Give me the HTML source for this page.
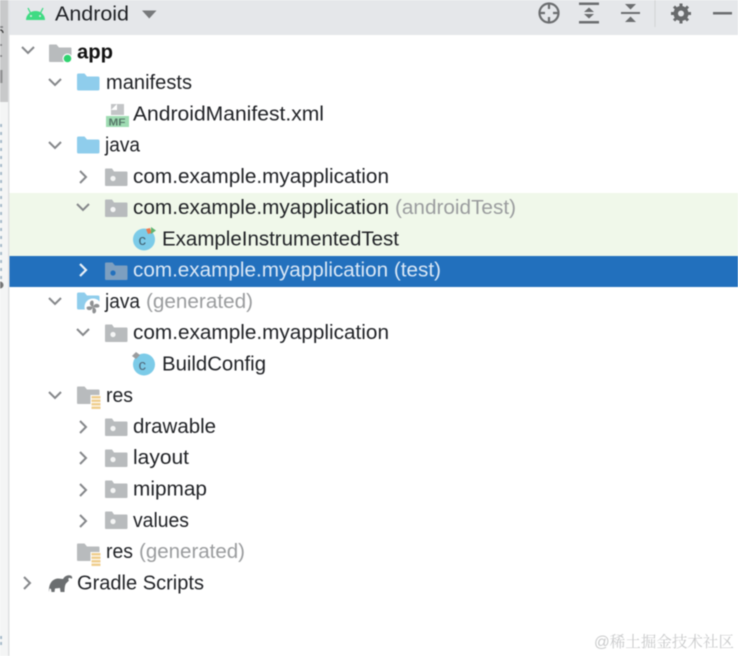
<!DOCTYPE html>
<html><head><meta charset="utf-8">
<style>
html,body{margin:0;padding:0;background:#fff;width:738px;height:656px;overflow:hidden}
svg{display:block;filter:blur(.5px)}
text{font-family:"Liberation Sans","Noto Sans CJK SC",sans-serif;font-size:20.5px;fill:#1f2125}
.g{fill:#9a9c9e}
.ch{fill:none;stroke:#85878a;stroke-width:2}
</style></head><body>
<svg width="738" height="656" viewBox="0 0 738 656" xmlns="http://www.w3.org/2000/svg">
<defs>
<g id="pkg"><path d="M0 1.500a1 1 0 0 1 1-1h6l2 3h12.500a1 1 0 0 1 1 1v12.500a1 1 0 0 1-1 1h-20.500a1 1 0 0 1-1-1z" fill="#b8bbbd"/><circle cx="8" cy="10.500" r="2.600" fill="#f4f5f5"/></g>
<g id="fold"><path d="M0 2a1.500 1.500 0 0 1 1.500-1.500h6l2.500 3h11a1.500 1.500 0 0 1 1.500 1.500v11a1.500 1.500 0 0 1-1.500 1.500h-19.500a1.500 1.500 0 0 1-1.500-1.500z" fill="#8fcdec"/></g>
<g id="grey"><path d="M0 1.500a1 1 0 0 1 1-1h6.500l2.500 3h11.500a1 1 0 0 1 1 1v12.500a1 1 0 0 1-1 1h-20.500a1 1 0 0 1-1-1z" fill="#b8bbbd"/></g>
<path id="d" class="ch" d="M-6-3L0 3L6-3"/>
<path id="r" class="ch" d="M-3-6L3 0L-3 6"/>
<g id="res"><use href="#grey"/><rect x="13.500" y="9" width="11" height="14" fill="#fff"/><rect x="14.500" y="10" width="9" height="2.500" fill="#f0cf90"/><rect x="14.500" y="13.500" width="9" height="2.500" fill="#f0cf90"/><rect x="14.500" y="17" width="9" height="2.500" fill="#f0cf90"/><rect x="14.500" y="20.500" width="9" height="2.500" fill="#f0cf90"/></g>
</defs>

<!-- left strip -->
<rect x="0" y="0" width="9" height="656" fill="#f4f5f5"/>
<rect x="0" y="0" width="8" height="102" fill="#c8c9ca"/>
<rect x="8" y="0" width="1.500" height="656" fill="#dfe0e2"/>
<rect x="0" y="70" width="2.500" height="13" fill="#919293"/>
<path d="M0 27h3M0 45h2M0 56h2" stroke="#77797b" stroke-width="1.500"/>
<path d="M0 30q3 0 3 3" stroke="#333" stroke-width="1.200" fill="none"/>
<path d="M1 124v155" stroke="#a4b8c8" stroke-width="2" stroke-dasharray="3 5"/>
<circle cx="0" cy="285" r="3.500" fill="#777"/>
<path d="M1 636v12" stroke="#a4b8c8" stroke-width="2" stroke-dasharray="3 3"/>

<!-- toolbar -->
<rect x="9.500" y="0" width="729" height="35" fill="#e5e7ea"/>
<path d="M30.500 13l-2.500-5M40.500 13l2.500-5" stroke="#3fdb83" stroke-width="1.300" fill="none"/>
<path d="M26 20a9.500 9 0 0 1 19 0z" fill="#3fdb83"/>
<circle cx="31" cy="16" r="1" fill="#e5e7ea"/><circle cx="40" cy="16" r="1" fill="#e5e7ea"/>
<text x="55" y="20.500" textLength="74" lengthAdjust="spacingAndGlyphs">Android</text>
<path d="M142 10.500h14.500l-7.250 8z" fill="#77797b"/>

<!-- toolbar icons -->
<g fill="none" stroke="#6c6e70" stroke-width="2.200">
<circle cx="549" cy="13" r="9.500"/><path d="M549 3v6M549 17v6M539 13h6M553 13h6"/>
</g>
<g fill="#6c6e70">
<rect x="579" y="2.500" width="20" height="2.500"/><rect x="579" y="21" width="20" height="2.500"/>
<path d="M589 7.500l5 4.500h-10zM589 18.500l5-4.500h-10z"/>
<rect x="621" y="12" width="19" height="2"/>
<path d="M625 4h11l-5.500 5.500zM625 22h11l-5.500-5.500z"/>
</g>
<rect x="654.500" y="0" width="1" height="27" fill="#d2d4d6"/>
<g fill="none" stroke="#686a6c">
<circle cx="681" cy="13.500" r="5.500" stroke-width="4"/>
<path d="M681 3.500v20M671 13.500h20M674 6.500l14 14M688 6.500l-14 14" stroke-width="3"/>
</g>
<circle cx="681" cy="13.500" r="3" fill="#e5e7ea"/>
<rect x="713" y="12" width="19" height="2.500" fill="#6c6e70"/>

<!-- row backgrounds -->
<rect x="9.500" y="193" width="729" height="63" fill="#f0f8ea"/>
<rect x="9.500" y="256" width="729" height="31" fill="#2270bd"/>

<!-- chevrons -->
<use href="#d" x="28" y="50"/>
<use href="#d" x="55" y="82"/>
<use href="#d" x="55" y="145"/>
<use href="#r" x="83" y="177"/>
<use href="#d" x="83" y="207"/>
<path d="M80 264l6 6l-6 6" fill="none" stroke="#e8f0f8" stroke-width="2.200"/>
<use href="#d" x="55" y="301"/>
<use href="#d" x="83" y="332"/>
<use href="#d" x="55" y="395"/>
<use href="#r" x="83" y="427"/>
<use href="#r" x="83" y="458"/>
<use href="#r" x="83" y="490"/>
<use href="#r" x="83" y="521"/>
<use href="#r" x="27" y="583"/>

<!-- app -->
<use href="#grey" x="49" y="44"/>
<circle cx="67.500" cy="58.500" r="5" fill="#fff"/><circle cx="67.500" cy="58.500" r="3.800" fill="#2fd36f"/>
<text x="77" y="58.500" textLength="36" lengthAdjust="spacingAndGlyphs" style="fill:#111;font-weight:700">app</text>

<use href="#fold" x="77" y="73"/>
<text x="106" y="89" textLength="86" lengthAdjust="spacingAndGlyphs">manifests</text>

<!-- manifest icon -->
<path d="M111 104h13v11h-13z" fill="#c3c5c7"/><path d="M111 110l6-6v6z" fill="#fff"/>
<rect x="106" y="116" width="23" height="11" fill="#9fdcb3"/>
<text x="108.500" y="125.500" style="font-size:10px;font-weight:700;fill:#58796a" textLength="17" lengthAdjust="spacingAndGlyphs">MF</text>
<text x="133" y="120.500" textLength="191" lengthAdjust="spacingAndGlyphs">AndroidManifest.xml</text>

<use href="#fold" x="77" y="136"/>
<text x="105" y="151.500" textLength="35" lengthAdjust="spacingAndGlyphs">java</text>

<use href="#pkg" x="105" y="168"/>
<text x="133" y="183" textLength="256" lengthAdjust="spacingAndGlyphs">com.example.myapplication</text>

<use href="#pkg" x="105" y="199"/>
<text x="133" y="214" textLength="256" lengthAdjust="spacingAndGlyphs">com.example.myapplication</text>
<text x="395" y="214" textLength="121" lengthAdjust="spacingAndGlyphs" class="g">(androidTest)</text>

<!-- class icon 1 -->
<circle cx="144" cy="239.500" r="11" fill="#7ccbe8"/>
<text x="138.500" y="245" style="font-size:15px;fill:#3f5f70">c</text>
<path d="M146 229l4-1 2 5-4 1z" fill="#e87a50"/><path d="M151 227l5 3.500-5 3.500z" fill="#5fb56f"/>
<text x="162" y="245.500" textLength="237" lengthAdjust="spacingAndGlyphs">ExampleInstrumentedTest</text>

<!-- selected -->
<path d="M105 263.500a1 1 0 0 1 1-1h6.500l2.500 3h11.500a1 1 0 0 1 1 1v12.500a1 1 0 0 1-1 1h-20.500a1 1 0 0 1-1-1z" fill="#7d9fc0"/>
<circle cx="113" cy="273" r="2.600" fill="#2270bd"/>
<text x="133" y="276.500" textLength="308" lengthAdjust="spacingAndGlyphs" style="fill:#dbe8f6">com.example.myapplication (test)</text>

<!-- java generated -->
<use href="#fold" x="77" y="292"/>
<circle cx="93" cy="307" r="8.500" fill="#fff"/>
<g fill="#8f9193"><path d="M93 307c-4-1-4-6-1-6.500 2 0 2 3 1 6.500z"/><path d="M93 307c1-4 6-4 6.500-1 0 2-3 2-6.500 1z"/><path d="M93 307c4 1 4 6 1 6.500-2 0-2-3-1-6.500z"/><path d="M93 307c-1 4-6 4-6.500 1 0-2 3-2 6.500-1z"/></g>
<text x="105" y="308" textLength="35" lengthAdjust="spacingAndGlyphs">java</text>
<text x="146" y="308" textLength="107" lengthAdjust="spacingAndGlyphs" class="g">(generated)</text>

<use href="#pkg" x="105" y="324"/>
<text x="133" y="339" textLength="256" lengthAdjust="spacingAndGlyphs">com.example.myapplication</text>

<!-- class icon 2 -->
<circle cx="144" cy="364.500" r="11" fill="#7ccbe8"/>
<text x="138.500" y="370" style="font-size:15px;fill:#50687a">c</text>
<path d="M132 356l4-4 4 3-4 4z" fill="#9a9c9e"/>
<text x="162" y="370.500" textLength="104" lengthAdjust="spacingAndGlyphs">BuildConfig</text>

<!-- res -->
<use href="#res" x="77" y="386"/>
<text x="106" y="402" textLength="27" lengthAdjust="spacingAndGlyphs">res</text>
<use href="#pkg" x="105" y="418"/>
<text x="133" y="433" textLength="83" lengthAdjust="spacingAndGlyphs">drawable</text>
<use href="#pkg" x="105" y="449"/>
<text x="133" y="464" textLength="56" lengthAdjust="spacingAndGlyphs">layout</text>
<use href="#pkg" x="105" y="480"/>
<text x="133" y="495.500" textLength="74" lengthAdjust="spacingAndGlyphs">mipmap</text>
<use href="#pkg" x="105" y="511"/>
<text x="133" y="527" textLength="56" lengthAdjust="spacingAndGlyphs">values</text>

<use href="#res" x="77" y="543"/>
<text x="106" y="558" textLength="27" lengthAdjust="spacingAndGlyphs">res</text>
<text x="139" y="558" textLength="106" lengthAdjust="spacingAndGlyphs" class="g">(generated)</text>

<!-- gradle elephant -->
<path d="M49 592c-.5-8 3-13 9-13.500 2 0 3.500.5 5 .5 1.500-3 5-4.500 7.500-3.500 1.500.5 2 2 1.500 3-1 .5-1.500-1-3-.5-1 .5-1 1.500 0 2.500l-3 3c-1 1.500-1.500 4-1.500 8.500h-4l-.5-4-5 .5-.5 3.500h-3l-.5-3-1.500-.5-.5 3.500z" fill="#6b6e70"/>
<text x="77" y="589.500" textLength="127" lengthAdjust="spacingAndGlyphs">Gradle Scripts</text>

<!-- watermark -->
<text x="594" y="647" textLength="140" lengthAdjust="spacingAndGlyphs" style="font-family:'Liberation Sans','Noto Serif CJK SC',serif;font-size:15.500px;fill:#c9cacb">@稀土掘金技术社区</text>
</svg>
</body></html>
